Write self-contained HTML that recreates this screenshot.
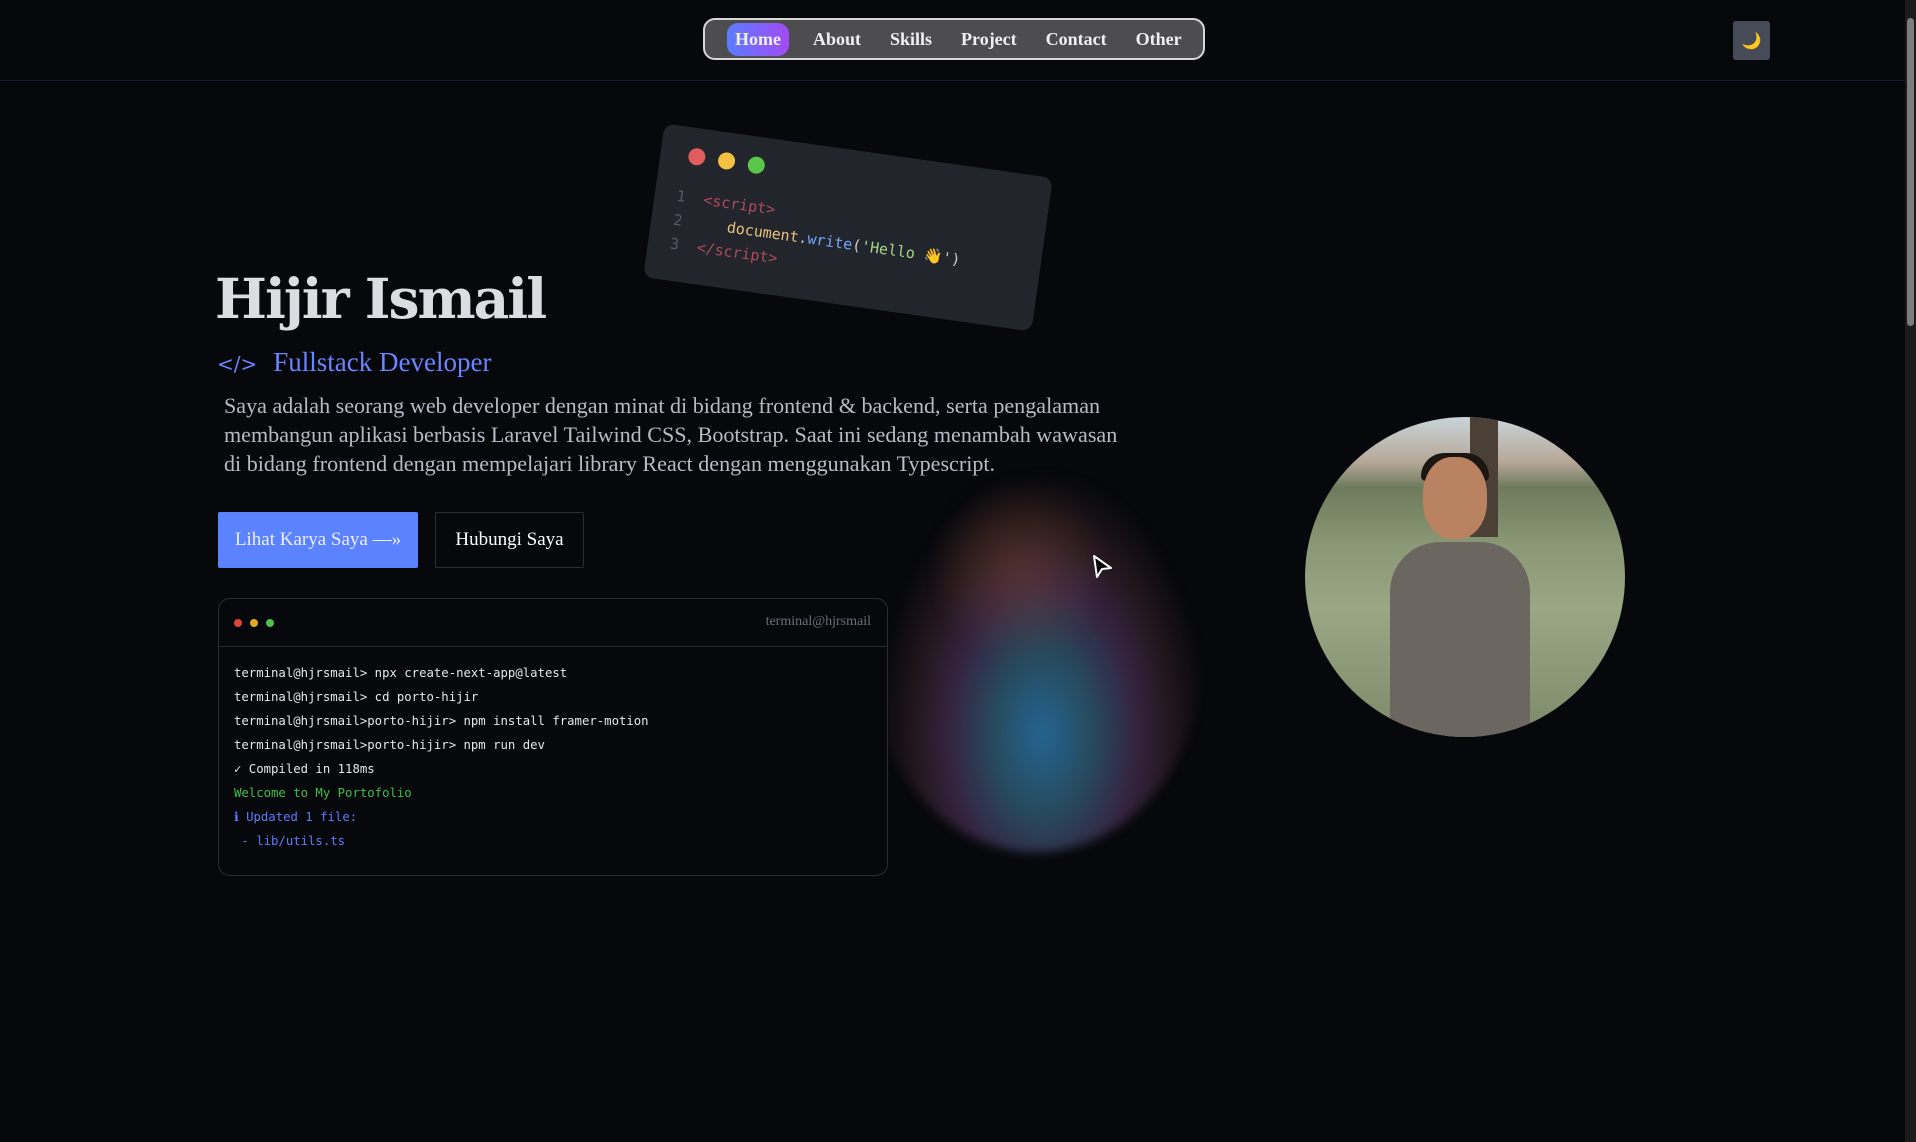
<!DOCTYPE html>
<html><head><meta charset="utf-8"><style>
*{margin:0;padding:0;box-sizing:border-box}
html,body{width:1916px;height:1142px;overflow:hidden;background:#07080c;font-family:"DejaVu Serif","Liberation Serif",serif;color:#d4d6dc}
.nav{position:absolute;left:703px;top:18px;width:502px;height:42px;border:2px solid #d8d8d8;border-radius:12px;background:#4d4d50;display:flex;align-items:center;padding-left:24px;gap:0}
.nav span{font-family:"Liberation Serif",serif;font-weight:bold;font-size:18px;color:#f0f0f0;margin-right:29px}
.nav .home{background:linear-gradient(90deg,#5b7cff,#a24bf5);border-radius:11px;padding:6px 8px;margin-left:-2px;margin-right:24px}
.theme{position:absolute;left:1733px;top:21px;width:37px;height:39px;background:#464b57;border-radius:3px;color:#f5b942;font-size:16px;text-align:center;line-height:39px}
.hline{position:absolute;left:0;top:80px;width:1905px;height:1px;background:#141a2a}
.scroll{position:absolute;left:1905px;top:0;width:11px;height:1142px;background:#1b1b1b}
.scroll div{position:absolute;left:2px;top:18px;width:7px;height:308px;background:#7c7c7c;border-radius:4px}
h1{position:absolute;left:215px;top:266px;font-size:55px;font-weight:bold;color:#dcdde3;letter-spacing:-2px}
.sub{position:absolute;left:217px;top:347px;color:#6b84ff;font-family:"Liberation Serif",serif;font-size:27px}
.sub b{font-weight:normal;margin-right:16px;font-family:"DejaVu Sans",sans-serif;font-size:20px}
.p{position:absolute;left:224px;top:391px;width:900px;line-height:29px;color:#b8bcc6;font-family:"Liberation Serif",serif;font-size:22.1px}
.b1{position:absolute;left:218px;top:512px;width:200px;height:56px;background:#5b82ff;color:#eef;font-family:"Liberation Serif",serif;font-size:19px;display:flex;align-items:center;justify-content:center;border-radius:2px}
.b2{position:absolute;left:435px;top:512px;width:149px;height:56px;border:1px solid #2a2d36;color:#fff;font-family:"Liberation Serif",serif;font-size:19px;display:flex;align-items:center;justify-content:center;border-radius:2px}
.term{position:absolute;left:218px;top:598px;width:670px;height:278px;border:1px solid #2a2c33;border-radius:12px;background:#07080c}
.term .hd{height:48px;border-bottom:1px solid #26282e;position:relative}
.dot{position:absolute;top:20px;width:8px;height:8px;border-radius:50%}
.term .lbl{position:absolute;right:16px;top:15px;font-family:"Liberation Serif",serif;font-size:14px;color:#6c707a}
.term pre{font-family:"DejaVu Sans Mono","Liberation Mono",monospace;font-size:12.3px;color:#e8e8e8;position:absolute;left:15px;top:62px;line-height:24px}
.code{position:absolute;left:652px;top:150px;width:392px;height:155px;background:#22252c;border-radius:10px;transform:rotate(8deg);transform-origin:center}
.code .c{position:absolute;width:17px;height:17px;border-radius:50%;top:20px}
.code pre{position:absolute;left:22px;top:58px;font-family:"DejaVu Sans Mono",monospace;font-size:15px;line-height:24px;color:#b04a5a}
.orb{position:absolute;left:870px;top:460px;width:332px;height:392px;border-radius:50%;
background:radial-gradient(ellipse at 52% 70%,rgba(40,110,160,.9) 0,rgba(60,120,150,.6) 20%,rgba(110,70,130,.45) 38%,rgba(100,60,70,.3) 52%,rgba(0,0,0,0) 68%);filter:blur(5px)}
.orb2{position:absolute;left:940px;top:470px;width:160px;height:200px;border-radius:50%;background:radial-gradient(circle,rgba(180,100,50,.28),rgba(0,0,0,0) 70%);filter:blur(10px)}
.photo{position:absolute;left:1305px;top:417px;width:320px;height:320px;border-radius:50%;overflow:hidden;
background:linear-gradient(180deg,#c9d3d9 0,#b6a898 14%,#6d7a5c 22%,#8a9876 40%,#9aa684 60%,#7d8a6a 100%)}
.photo .body{position:absolute;left:85px;top:125px;width:140px;height:200px;background:#6b6660;border-radius:50px 50px 10px 10px}
.photo .head{position:absolute;left:118px;top:40px;width:64px;height:82px;background:#b98361;border-radius:45%}
.photo .hair{position:absolute;left:116px;top:36px;width:68px;height:28px;background:#1b1612;border-radius:40px 40px 8px 8px}
.photo .tree{position:absolute;left:165px;top:0;width:28px;height:120px;background:#4a4035}
</style></head><body>
<div class="nav"><span class="home">Home</span><span>About</span><span>Skills</span><span>Project</span><span>Contact</span><span>Other</span></div>
<div class="theme">🌙</div>
<div class="hline"></div>
<div class="scroll"><div></div></div>
<div class="code">
<div class="c" style="left:28px;background:#e05d5d"></div><div class="c" style="left:58px;background:#f3c242"></div><div class="c" style="left:88px;background:#5cc64a"></div>
<pre><span style="color:#555a64">1  </span>&lt;script&gt;
<span style="color:#555a64">2  </span>   <span style="color:#e8c27a">document</span><span style="color:#ccc">.</span><span style="color:#6fa8ff">write</span><span style="color:#ccc">(</span><span style="color:#a8d48a">'Hello</span> <span style="color:#f5c842">👋</span><span style="color:#ccc">')</span>
<span style="color:#555a64">3  </span>&lt;/script&gt;</pre>
</div>
<h1>Hijir Ismail</h1>
<div class="sub"><b>&lt;/&gt;</b>Fullstack Developer</div>
<div class="p">Saya adalah seorang web developer dengan minat di bidang frontend &amp; backend, serta pengalaman membangun aplikasi berbasis Laravel Tailwind CSS, Bootstrap. Saat ini sedang menambah wawasan di bidang frontend dengan mempelajari library React dengan menggunakan Typescript.</div>
<div class="b1">Lihat Karya Saya —»</div>
<div class="b2">Hubungi Saya</div>
<div class="orb"></div><div class="orb2"></div>
<div class="term"><div class="hd"><div class="dot" style="left:15px;background:#e0443c"></div><div class="dot" style="left:31px;background:#e6a91b"></div><div class="dot" style="left:47px;background:#4cc24a"></div><div class="lbl">terminal@hjrsmail</div></div>
<pre>terminal@hjrsmail&gt; npx create-next-app@latest
terminal@hjrsmail&gt; cd porto-hijir
terminal@hjrsmail&gt;porto-hijir&gt; npm install framer-motion
terminal@hjrsmail&gt;porto-hijir&gt; npm run dev
✓ Compiled in 118ms
<span style="color:#3fbf4a">Welcome to My Portofolio</span>
<span style="color:#5b7cff">ℹ Updated 1 file:</span>
<span style="color:#5b7cff"> - lib/utils.ts</span></pre></div>
<div class="photo"><div class="tree"></div><div class="body"></div><div class="hair"></div><div class="head"></div></div>
<svg style="position:absolute;left:1092px;top:554px" width="22" height="26" viewBox="0 0 22 26"><path d="M2 2 L19 14 L10 15 L5 23 Z" fill="#000" stroke="#fff" stroke-width="2" stroke-linejoin="round"/></svg>
</body></html>
